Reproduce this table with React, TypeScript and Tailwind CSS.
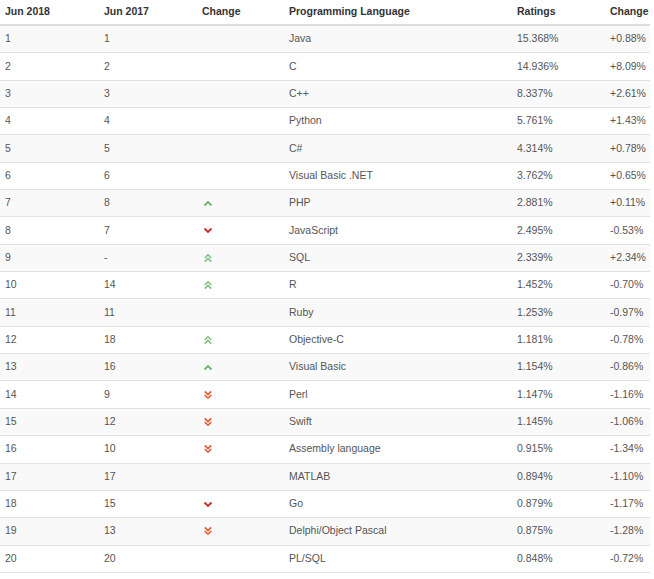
type Trend = "up" | "up2" | "down" | "down2" | null;

interface Row {
  now: number;
  prev: string;
  trend: Trend;
  lang: string;
  rating: string;
  change: string;
}

const rows: Row[] = [
  { now: 1, prev: "1", trend: null, lang: "Java", rating: "15.368%", change: "+0.88%" },
  { now: 2, prev: "2", trend: null, lang: "C", rating: "14.936%", change: "+8.09%" },
  { now: 3, prev: "3", trend: null, lang: "C++", rating: "8.337%", change: "+2.61%" },
  { now: 4, prev: "4", trend: null, lang: "Python", rating: "5.761%", change: "+1.43%" },
  { now: 5, prev: "5", trend: null, lang: "C#", rating: "4.314%", change: "+0.78%" },
  { now: 6, prev: "6", trend: null, lang: "Visual Basic .NET", rating: "3.762%", change: "+0.65%" },
  { now: 7, prev: "8", trend: "up", lang: "PHP", rating: "2.881%", change: "+0.11%" },
  { now: 8, prev: "7", trend: "down", lang: "JavaScript", rating: "2.495%", change: "-0.53%" },
  { now: 9, prev: "-", trend: "up2", lang: "SQL", rating: "2.339%", change: "+2.34%" },
  { now: 10, prev: "14", trend: "up2", lang: "R", rating: "1.452%", change: "-0.70%" },
  { now: 11, prev: "11", trend: null, lang: "Ruby", rating: "1.253%", change: "-0.97%" },
  { now: 12, prev: "18", trend: "up2", lang: "Objective-C", rating: "1.181%", change: "-0.78%" },
  { now: 13, prev: "16", trend: "up", lang: "Visual Basic", rating: "1.154%", change: "-0.86%" },
  { now: 14, prev: "9", trend: "down2", lang: "Perl", rating: "1.147%", change: "-1.16%" },
  { now: 15, prev: "12", trend: "down2", lang: "Swift", rating: "1.145%", change: "-1.06%" },
  { now: 16, prev: "10", trend: "down2", lang: "Assembly language", rating: "0.915%", change: "-1.34%" },
  { now: 17, prev: "17", trend: null, lang: "MATLAB", rating: "0.894%", change: "-1.10%" },
  { now: 18, prev: "15", trend: "down", lang: "Go", rating: "0.879%", change: "-1.17%" },
  { now: 19, prev: "13", trend: "down2", lang: "Delphi/Object Pascal", rating: "0.875%", change: "-1.28%" },
  { now: 20, prev: "20", trend: null, lang: "PL/SQL", rating: "0.848%", change: "-0.72%" },
];

// small chevrons drawn like the font-awesome ones on the TIOBE page
function TrendIcon({ trend }: { trend: Trend }) {
  if (!trend) return null;
  if (trend === "up")
    return (
      <svg width="10" height="7" viewBox="0 0 10 7" className="ml-[1px]">
        <path d="M1.5 5.5 L5 2 L8.5 5.5" fill="none" stroke="#6fb56f" strokeWidth="1.8" />
      </svg>
    );
  if (trend === "up2")
    return (
      <svg width="10" height="10" viewBox="0 0 10 10" className="ml-[1px]">
        <path d="M1.8 5 L5 1.8 L8.2 5 M1.8 8.6 L5 5.4 L8.2 8.6" fill="none" stroke="#7fbf7f" strokeWidth="1.5" />
      </svg>
    );
  if (trend === "down")
    return (
      <svg width="10" height="7" viewBox="0 0 10 7" className="ml-[1px]">
        <path d="M1.5 1.5 L5 5 L8.5 1.5" fill="none" stroke="#c9302c" strokeWidth="1.9" />
      </svg>
    );
  return (
    <svg width="10" height="10" viewBox="0 0 10 10" className="ml-[1px]">
      <path d="M1.8 1.4 L5 4.6 L8.2 1.4 M1.8 5 L5 8.2 L8.2 5" fill="none" stroke="#e0582e" strokeWidth="1.6" />
    </svg>
  );
}

const cols = "grid grid-cols-[99px_98px_87px_228px_93px_45px]";

export default function App() {
  return (
    <div className="min-h-screen bg-white" style={{ fontFamily: '"Liberation Sans", Arial, sans-serif' }}>
      <div className="w-[650px] text-[10.5px]">
        <div className={`${cols} h-[26px] items-center border-b-2 border-[#dddddd] font-bold text-[#333333]`}>
          <div className="pl-[5px]">Jun 2018</div>
          <div className="pl-[5px]">Jun 2017</div>
          <div className="pl-[5px]">Change</div>
          <div className="pl-[5px]">Programming Language</div>
          <div className="pl-[5px]">Ratings</div>
          <div className="pl-[5px]">Change</div>
        </div>
        {rows.map((r, i) => (
          <div
            key={r.now}
            className={`${cols} h-[27.35px] items-center border-b border-[#e2e2e2] text-[#555555] ${
              i % 2 === 0 ? "bg-[#f9f9f9]" : "bg-white"
            }`}
          >
            <div className="pl-[5px]">{r.now}</div>
            <div className="pl-[5px]">{r.prev}</div>
            <div className="pl-[5px] flex items-center">
              <TrendIcon trend={r.trend} />
            </div>
            <div className="pl-[5px]">{r.lang}</div>
            <div className="pl-[5px]">{r.rating}</div>
            <div className="pl-[5px]">{r.change}</div>
          </div>
        ))}
      </div>
    </div>
  );
}
